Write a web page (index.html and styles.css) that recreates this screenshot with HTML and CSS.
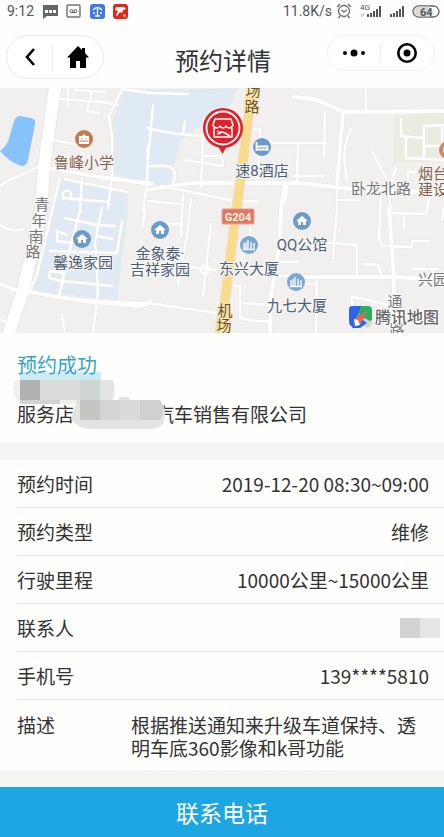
FILE: index.html
```html
<!DOCTYPE html>
<html lang="zh-CN">

<head>
    <meta charset="UTF-8">
    <meta name="viewport" content="width=device-width, initial-scale=1.0">
    <title>预约详情</title>
    <link rel="stylesheet" href="styles.css">
</head>

<body>
    <!-- Phone status bar -->
    <div class="status-bar">
        <span>9:12</span>
        <svg class="status-icons" width="86" height="18" viewBox="0 0 86 18">
            <path d="M1 3h15v11H5l-4 3z" fill="#666" />
            <path d="M3 8h3v3H3zM7 8h3v3H7zM11 8h3v3h-3z" fill="#fff" />
            <rect x="25" y="3" width="13" height="12" rx="1" fill="none" stroke="#777" stroke-width="1.5" />
            <circle cx="29.500" cy="9" r="1.500" fill="none" stroke="#666" />
            <circle cx="33.500" cy="9" r="1.500" fill="none" stroke="#666" />
            <path d="M29 10.500h5" stroke="#666" />
            <rect x="48" y="2" width="15" height="15" rx="3" fill="#3f78e8" />
            <path d="M51 8q4.500-5 9 0M55.500 6v8M53 14h5M51 11h2M58 11h2" fill="none" stroke="#fff" stroke-width="1.300" />
            <rect x="71" y="2" width="15" height="15" rx="3" fill="#e5261c" />
            <path d="M74 5h8l2 2-3 1-1 3-2-1-3 4-1-1 2-4-3-1z" fill="#fff" />
            <circle cx="82.500" cy="13.500" r="1.500" fill="#f8b01d" />
        </svg>
        <span class="net-speed">11.8K/s</span>
        <svg class="status-icons" width="104" height="18" viewBox="0 0 104 18">
            <g fill="none" stroke="#666" stroke-width="1.300">
                <circle cx="8" cy="9" r="5.500" />
                <path d="M5.500 8l2.500 2 3-2M1 5l3-3M15 5l-3-3M4 14l-1.500 2M12 14l1.500 2" />
            </g>
            <text x="24" y="8" class="tiny-text">4G</text>
            <path d="M25 12h1v3h-1zM27 11h1v3h-1z" fill="#bbb" />
            <path d="M31 12h2v3h-2zM34 11h2v4h-2zM37 9h2v6h-2zM40 7h2v8h-2zM43 4h2v11h-2z" fill="#555" />
            <path d="M54 12h2v3h-2zM57 11h2v4h-2zM60 9h2v6h-2zM63 7h2v8h-2zM66 4h2v11h-2z" fill="#555" />
            <rect x="77" y="4" width="26" height="11" rx="5.500" fill="#fff" stroke="#666" stroke-width="1.300" />
            <path d="M83 4.500h11v10H83a5 5 0 0 1 0-10z" fill="#dcdcdc" />
            <text x="84" y="14" class="battery-text">64</text>
        </svg>
    </div>

    <header class="nav-bar">
        <div class="capsule capsule-left">
            <button type="button" aria-label="返回">
                <svg width="14" height="20" viewBox="0 0 14 20">
                    <path d="M11 2L4 10l7 8" fill="none" stroke="#000" stroke-width="2.600" />
                </svg>
            </button>
            <button type="button" aria-label="首页">
                <svg width="22" height="24" viewBox="0 0 22 24">
                    <path d="M11 1L0 12.500h3V23h6v-7h4v7h6V12.500h3L18 8V3h-3v2z" fill="#000" />
                </svg>
            </button>
        </div>
        <h1>预约详情</h1>
        <div class="capsule capsule-right">
            <button type="button" aria-label="更多">
                <svg width="22" height="10" viewBox="0 0 22 10">
                    <circle cx="2" cy="5" r="2" />
                    <circle cx="11" cy="5" r="3.500" />
                    <circle cx="20" cy="5" r="2" />
                </svg>
            </button>
            <button type="button" aria-label="关闭">
                <svg width="22" height="22" viewBox="0 0 22 22">
                    <circle cx="11" cy="11" r="8.700" fill="none" stroke="#000" stroke-width="2.600" />
                    <circle cx="11" cy="11" r="3.500" />
                </svg>
            </button>
        </div>
    </header>

    <!-- Store location map -->
    <svg class="map" viewBox="0 88 444 245" preserveAspectRatio="xMidYMid slice" role="img" aria-label="地图">
        <defs>
            <g id="roads-small">
                <path d="M0 186q8-6 14-8t24-11M55 140l22 5M61 99l42 3 15 3M68 88v18M92 91l-5 20 12 2M75 90l30 2" />
                <path d="M150 93l-28-4-13 27 3 20v38M148 146l-1 37-4 28M60 178l-8 33-15 64-7 15" />
                <path d="M65 179l62 13M82 178l-2 33-8 30-13 55M112 176l-4 32M63 199v-6q4-5 8 0v6M63 198l45 4" />
                <path d="M65 218l32 7 18 1M102 208l-7 33 3 50-5 42M57 231v10l15 2M57 231l10 4M97 236l15 3M122 221l-5 32-67-2M50 271l13 2-1 8-13-3zM62 281l50 5" />
                <path d="M0 283l14 8M0 225q12 8 23 4M62 315l3 18M0 320l7 2M143 226l2-18" />
                <path d="M148 93l40 1M153 106l-5 53M148 128q20 6 57 8l45 0M183 133l2-12M148 166h17q10 0 10 10l-2 10M203 136l-2 50M205 156h14q4 0 4 10l-39-6M251 129h9v18l-4 36" />
                <path d="M161 186l74 15h22M148 201l32 3M183 194l-2 42M191 199l-3 30-10 56M163 224h18M288 183l-3 20M262 143h64M298 143l-1 40" />
                <path d="M294 176h30M325 113l-1 43M366 88v24M351 129q-7 15-7 30l3 22M372 151l14 27 5 30M396 168l-8 24M381 193l-2 45 3 8 30 1v-6h17M389 213l37 1 4-20M404 213v15M401 119v17l21 2M406 138v20l38 2M424 158v-32l20-1M424 146h18v-20M408 180v-8h8" />
                <path d="M211 224l-5 44-3 27M185 266l20 3 13 1M148 303q-90-1-148 -18M148 303l68 10M230 286h10v32q14 4 30 3M243 303l26 2M250 225v18" />
                <path d="M333 258l4-50V184M304 241l53 4v32M271 276h24M280 262h18M317 276l-1 57M298 284h19M352 297l12 2 23 6M364 264l14 1 4 11M412 269h27M432 269v12M352 297v10M337 200h22M444 208l-2 12" />
            </g>
            <g id="roads-mid">
                <path d="M42 167l58 10 52 7M23 291l60 10 57 5 10-4M148 190l42-7h110l51 6 93 4" />
                <path d="M294 97l20 2 30 13 100-1M343 113l-6 73M281 208l-1 33-9 54-1 38M389 208l5 70v55M298 277h96l50 3M281 208l4-25" />
            </g>
            <g id="home-icon">
                <circle r="9" fill="#6b9cc9" />
                <path d="M0-5l6 5H4v4H1V1h-2v3h-3V0h-2z" fill="#fff" />
            </g>
            <g id="tower-icon">
                <circle r="9" fill="#7aa7d0" />
                <path d="M-5 4v-6M-3 4v-7M-1 4v-9M2 4v-7M5 4v-6M-6 4.500H6" stroke="#fff" stroke-width="1.300" />
            </g>
        </defs>
        <rect y="88" width="444" height="245" fill="#f2f0ee" />
        <path d="M124 90l114-2-8 18-28 18-21 15-8 30-3 17-23-2-35-10-1-25-2-20zM60 178l67 12 1 20-11 90-84-9 17-83z" fill="#dfeaf4" />
        <path d="M394 116l50-4v46l-10 4h-40z" fill="#ecebdf" />
        <path d="M14 121q2-5 6-5l11 2q5 1 4 6l-7 36q-1 6-7 6-13-5-21-15 8-6 10-16z" fill="#88c2fb" />
        <g class="road-edge">
            <use href="#roads-small" stroke-width="3.600" />
            <use href="#roads-mid" stroke-width="5" />
            <path d="M55 88l-11 78-3 45-18 80-15 44" stroke-width="14" />
        </g>
        <g class="road">
            <use href="#roads-small" stroke-width="2.400" />
            <use href="#roads-mid" stroke-width="3.800" />
            <path d="M55 88l-11 78-3 45-18 80-15 44" stroke-width="12" />
            <circle cx="205" cy="270" r="4" stroke-width="2" />
        </g>
        <path d="M252 86l-8 67-10 75-10 80-5 28" class="road-edge" stroke-width="11" />
        <path d="M252 86l-8 67-10 75-10 80-5 28" class="highway" />

        <rect x="222" y="209" width="32" height="15" rx="1" fill="#dd7863" stroke="#e8a393" />
        <text x="238" y="221" class="route-number">G204</text>

        <g class="place school">
            <text x="84" y="168">鲁峰小学</text>
            <text x="433" y="179">烟台</text>
            <text x="433" y="195">建设</text>
        </g>
        <g class="place">
            <text x="83" y="268">馨逸家园</text>
            <text x="160" y="259">金象泰·</text>
            <text x="160" y="275">吉祥家园</text>
            <text x="262" y="176">速8酒店</text>
            <text x="249" y="274">东兴大厦</text>
            <text x="302" y="250">QQ公馆</text>
            <text x="297" y="311">九七大厦</text>
        </g>
        <g class="place road-name">
            <text x="381" y="194">卧龙北路</text>
            <text x="433" y="285">兴园</text>
            <text x="395" y="307">通</text>
            <text x="397" y="335">路</text>
            <text x="42" y="210">青</text>
            <text x="39" y="226">年</text>
            <text x="36" y="242">南</text>
            <text x="33" y="257">路</text>
        </g>
        <g class="place highway-name">
            <text x="253" y="96">场</text>
            <text x="252" y="112">路</text>
            <text x="225" y="316">机</text>
            <text x="224" y="331">场</text>
        </g>

        <use href="#home-icon" x="82" y="239" />
        <use href="#home-icon" x="160" y="230" />
        <use href="#home-icon" x="302" y="221" />
        <use href="#tower-icon" x="249" y="245" />
        <use href="#tower-icon" x="296" y="282" />
        <circle cx="84" cy="139" r="9" fill="#c47b50" />
        <path d="M79 136h3l2-2 2 2h3v8H79z" fill="#fff" />
        <path d="M80 141h8M82 138v1M86 138v1" stroke="#c47b50" />
        <circle cx="448" cy="150" r="9" fill="#d08a5c" />
        <circle cx="448" cy="150" r="5" fill="#fff" />
        <circle cx="262" cy="147" r="9" fill="#6b9cc9" />
        <path d="M256.500 142v9M256.500 149.500h11v-3h-11M267.500 147v4" fill="none" stroke="#fff" stroke-width="1.800" />

        <!-- Store marker -->
        <path d="M218 146h9l-4.500 8z" fill="#e0202a" />
        <circle cx="223" cy="128" r="20" fill="#e0202a" />
        <circle cx="223" cy="128" r="16.500" fill="none" stroke="#fff" stroke-width="1.800" />
        <g fill="none" stroke="#fff" stroke-width="1.500" stroke-linejoin="round">
            <path d="M215 119h16l2 6q-1 3-3.500 3t-3.500-2q-1 2-3 2t-3-2q-1 2-3.500 2t-3.500-3zM214 128v9h18v-9" />
            <path d="M217 131q3 2 5 1l3 1 5 3M217 134l4-1" />
        </g>

        <!-- Map provider logo -->
        <path d="M352 306h10l-4 9-3 12q-6 0-6-6v-11q0-4 3-4z" fill="#2f63e6" />
        <path d="M361 306h7q4 0 4 4v10l-6 4-8-8z" fill="#2cae60" />
        <path d="M364 318l8 4q0 5-5 6l-6-4z" fill="#d4d6d8" />
        <path d="M352 328l6-12 9 7-7 5z" fill="#2f63e6" />
        <path d="M367 311l-13 8 4 1 2 5z" fill="#f0604a" />
        <path d="M354 319l4 1 2 5-5 1z" fill="#fff" />
        <text x="407" y="323" class="map-logo">腾讯地图</text>
    </svg>

    <section class="result">
        <h2>预约成功</h2>
        <p>服务店<span class="hidden-name"></span>汽车销售有限公司</p>
        <svg class="mosaic" width="156" height="60" viewBox="0 0 156 60">
            <path d="M9 0h81v8h-81z" fill="#cdeaf1" />
            <path d="M4 8h96q8 12 0 24H10q-12-12-6-24z" fill="#f0f0ef" />
            <path d="M9 8h20v20H9z" fill="#b1b1b1" />
            <path d="M29 8h40v20H29z" fill="#dadcda" />
            <path d="M69 8h20v20H69z" fill="#cdd6d4" />
            <path d="M89 8h13q3 8-1 20H89z" fill="#e4e4e4" />
            <path d="M9 28h40v4H9z" fill="#d2d2d2" />
            <path d="M66 28h42v-3h8l4 3h28q10 10 4 24-6 5-12 5H82q-16 0-22-10z" fill="#e3e3e1" />
            <path d="M69 28h20v20H69z" fill="#c4c6c3" />
            <path d="M89 28h20v20H89z" fill="#d4d4d4" />
            <path d="M109 28h20v20h-20z" fill="#dadada" />
            <path d="M129 28h20q7 10 0 20h-20z" fill="#d0d0d0" />
        </svg>
    </section>

    <dl class="details">
        <div class="row">
            <dt>预约时间</dt>
            <dd>2019-12-20 08:30~09:00</dd>
        </div>
        <div class="row">
            <dt>预约类型</dt>
            <dd>维修</dd>
        </div>
        <div class="row">
            <dt>行驶里程</dt>
            <dd>10000公里~15000公里</dd>
        </div>
        <div class="row">
            <dt>联系人</dt>
            <dd class="hidden-contact"></dd>
        </div>
        <div class="row">
            <dt>手机号</dt>
            <dd>139****5810</dd>
        </div>
        <div class="row description">
            <dt>描述</dt>
            <dd>根据推送通知来升级车道保持、透明车底360影像和k哥功能</dd>
        </div>
    </dl>

    <button type="button" class="call-button">联系电话</button>
</body>

</html>
```
FILE: styles.css
```css
* {
    box-sizing: border-box;
}

body {
    margin: 0;
    font-family: "Noto Sans CJK SC", sans-serif;
    font-size: 19px;
    color: #333;
    background-color: #f5f5f4;
}

h1,
h2,
p,
dl,
dd {
    margin: 0;
    font-weight: normal;
}

button {
    border: none;
    padding: 0;
    background: none;
    font-family: inherit;
    cursor: pointer;
}

svg {
    display: block;
}

/* Status bar */
.status-bar {
    display: flex;
    align-items: center;
    height: 22px;
    padding: 0 4px 0 7px;
    background-color: #fefefe;
    font-family: Roboto, sans-serif;
    font-size: 14px;
    color: #555;
}

.status-bar .status-icons {
    flex: none;
    margin-left: 8px;
}

.net-speed {
    margin-left: auto;
}

.net-speed + .status-icons {
    margin-left: 4px;
}

.tiny-text {
    font-size: 8px;
    fill: #555;
}

.battery-text {
    font-size: 11px;
    font-weight: bold;
    fill: #555;
}

/* Navigation */
.nav-bar {
    display: grid;
    grid-template-columns: 113px 1fr 108px;
    align-items: start;
    height: 66px;
    padding: 13px 9px 0 6px;
    background-color: #fefefe;
}

.nav-bar h1 {
    font-size: 24px;
    line-height: 50px;
    text-align: center;
}

.capsule {
    display: flex;
    border: 1px solid #e9e9e9;
    border-radius: 22px;
    background-color: #fff;
}

.capsule button {
    flex: 1;
    display: flex;
    align-items: center;
    justify-content: center;
}

.capsule button + button {
    position: relative;
}

.capsule button + button::before {
    content: "";
    position: absolute;
    left: 0;
    top: 20%;
    height: 60%;
    border-left: 1px solid #ececec;
}

.capsule-left {
    width: 98px;
    height: 44px;
}

.capsule-left button:first-child {
    flex: 0 0 45px;
}

.capsule-right {
    height: 36px;
    border-color: #f1f1f1;
}

.capsule-right button:first-child {
    flex: 0 0 52px;
}

/* Map */
.map {
    width: 100%;
    height: 245px;
}

.road,
.road-edge,
.highway {
    fill: none;
    stroke-linejoin: round;
    stroke-linecap: round;
}

.road {
    stroke: #fff;
}

.road-edge {
    stroke: #e9e7e5;
}

.highway {
    stroke: #fadb8b;
    stroke-width: 9px;
}

.place {
    font-family: Roboto, "Noto Sans CJK SC", sans-serif;
    font-size: 15px;
    text-anchor: middle;
    fill: #4d6075;
    stroke: #f7f7f7;
    stroke-width: 2px;
    paint-order: stroke;
}

.school {
    fill: #85614f;
}

.road-name {
    fill: #777;
}

.highway-name {
    fill: #6b5426;
    stroke: #fbe7b4;
}

.route-number {
    font-family: Roboto, sans-serif;
    font-size: 11px;
    font-weight: bold;
    text-anchor: middle;
    fill: #fff3dc;
}

.map-logo {
    font-size: 16px;
    font-weight: 500;
    text-anchor: middle;
    fill: #666;
    stroke: #fff;
    stroke-width: 2px;
    paint-order: stroke;
}

/* Booking result */
.result {
    position: relative;
    padding: 18px 17px 14px;
    line-height: 28px;
    background-color: #fefefc;
}

.result h2 {
    position: relative;
    z-index: 1;
    margin-bottom: 21px;
    font-size: 20px;
    color: #36a5c3;
}

.hidden-name {
    display: inline-block;
    width: 81px;
}

.mosaic {
    position: absolute;
    left: 11px;
    top: 39px;
}

/* Booking details */
.details {
    margin: 18px 0 17px;
    padding-left: 17px;
    background-color: #fefefc;
}

.row {
    display: flex;
    align-items: center;
    justify-content: space-between;
    height: 48px;
    padding-right: 15px;
    border-bottom: 1px solid #e3e3e3;
}

.hidden-contact {
    width: 40px;
    height: 20px;
    margin-right: -11px;
    background: linear-gradient(to right, #d2d2d2 50%, #e5e5e5 50%);
}

.description {
    align-items: flex-start;
    height: auto;
    padding-top: 13px;
    padding-bottom: 11px;
    border-bottom: none;
    line-height: 23px;
}

.description dt {
    flex: 0 0 114px;
}

.description dd {
    flex: 1;
}

.call-button {
    display: block;
    width: 100%;
    height: 50px;
    background-color: #1ea6e3;
    color: #fff;
    font-size: 23px;
}
```
